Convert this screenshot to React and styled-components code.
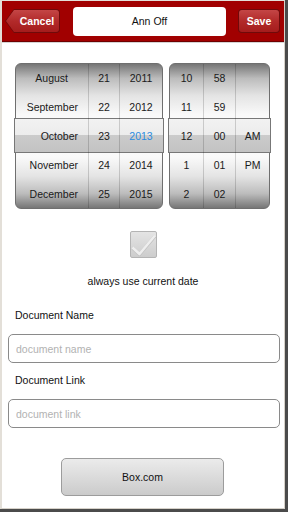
import React from "react";
import styled, { createGlobalStyle } from "styled-components";

const GlobalStyle = createGlobalStyle`
  html, body {
    margin: 0;
    padding: 0;
    background: #4b4b4b;
  }
  body {
    font-family: "Liberation Sans", Arial, sans-serif;
  }
  * {
    box-sizing: border-box;
  }
`;

const Frame = styled.div`
  width: 288px;
  height: 512px;
  background: #4b4b4b;
  padding: 0 3px 3px 0;
`;

const Screen = styled.div`
  height: 100%;
  background: #fff;
  border-left: 2px solid #e3dfd8;
  border-top: 1px solid #e3dfd8;
  border-right: 1px solid #d6d1c9;
  border-bottom: 1px solid #d6d1c9;
  display: flex;
  flex-direction: column;
`;

const Header = styled.header`
  height: 41px;
  flex-shrink: 0;
  background: #a10000;
  border-bottom: 1px solid #6e0000;
  box-shadow: 0 1px 0 #d4d4d4;
  display: flex;
  align-items: center;
  padding: 0 4px 0 3px;
`;

const BarButton = styled.button`
  width: ${(p) => p.$width}px;
  height: 24px;
  border: none;
  padding: 1px;
  border-radius: 4px;
  background: #6f0a0a;
  cursor: pointer;
  font-family: inherit;
  display: flex;
  clip-path: ${(p) =>
    p.$back ? "polygon(9px 0, 100% 0, 100% 100%, 9px 100%, 0 50%)" : "none"};

  span {
    flex: 1;
    display: flex;
    align-items: center;
    justify-content: center;
    border-radius: 3px;
    background: linear-gradient(#c44646 0%, #b22a2a 50%, #a51c1c 100%);
    color: #fff;
    font-weight: bold;
    font-size: 10.5px;
    padding-left: ${(p) => (p.$back ? "9px" : "0")};
    clip-path: ${(p) =>
      p.$back ? "polygon(8px 0, 100% 0, 100% 100%, 8px 100%, 0 50%)" : "none"};
  }
`;

const TitleField = styled.div`
  width: 153px;
  height: 29px;
  margin: 0 12px 0 13px;
  background: #fff;
  border-radius: 4px;
  display: flex;
  align-items: center;
  justify-content: center;
  font-size: 10.5px;
  color: #111;
`;

const Content = styled.main`
  display: flex;
  flex-direction: column;
  padding-top: 21px;
`;

const PickerRow = styled.div`
  display: flex;
  gap: 6px;
  padding-left: 13px;
`;

const Picker = styled.div`
  position: relative;
  display: flex;
  width: ${(p) => p.$width}px;
  height: 146px;
  border: 1px solid #6f6f6f;
  border-radius: 6px;
  background: linear-gradient(
    #767676 0%,
    #bcbcbc 10%,
    #e4e4e4 22%,
    #f9f9f9 35%,
    #ffffff 50%,
    #f9f9f9 65%,
    #e4e4e4 78%,
    #bcbcbc 90%,
    #767676 100%
  );
`;

const Band = styled.div`
  position: absolute;
  left: -2px;
  right: -2px;
  top: 54px;
  height: 35px;
  border: 1px solid #777;
  background: linear-gradient(#f2f2f2 0%, #ececec 50%, #cbcbcb 50%, #c3c3c3 100%);
`;

const Column = styled.div`
  position: relative;
  z-index: 1;
  width: ${(p) => p.$width}px;
  display: flex;
  flex-direction: column;
  border-left: ${(p) => (p.$first ? "none" : "1px solid rgba(0, 0, 0, 0.16)")};
`;

const Cell = styled.div`
  height: 29px;
  display: flex;
  align-items: center;
  justify-content: ${(p) => (p.$right ? "flex-end" : "center")};
  padding-right: ${(p) => (p.$right ? `${p.$inset}px` : "0")};
  font-size: 10.5px;
  color: ${(p) => (p.$active ? "#2b8be0" : "#1a1a1a")};
`;

const CheckWrap = styled.div`
  display: flex;
  justify-content: center;
  margin-top: 22px;
`;

const CheckBox = styled.div`
  width: 27px;
  height: 27px;
  border: 1px solid #b4b4b4;
  border-radius: 2px;
  background: linear-gradient(#e4e4e4, #cdcdcd);
  display: flex;
`;

const CheckLabel = styled.div`
  text-align: center;
  font-size: 10.5px;
  color: #111;
  margin-top: 17px;
  line-height: 13px;
`;

const Form = styled.section`
  display: flex;
  flex-direction: column;
  padding: 0 4px 0 6px;
  margin-top: 21px;
`;

const Label = styled.label`
  font-size: 10.5px;
  color: #111;
  line-height: 13px;
  padding-left: 7px;
  margin-top: ${(p) => p.$top || 0}px;
`;

const Input = styled.input`
  width: 272px;
  height: 29px;
  margin-top: 12px;
  border: 1px solid #8a8a8a;
  border-radius: 5px;
  padding: 0 7px;
  font-family: inherit;
  font-size: 10.5px;
  color: #111;
  outline: none;

  &::placeholder {
    color: #b2b2b2;
  }
`;

const ActionButton = styled.button`
  align-self: center;
  width: 163px;
  height: 38px;
  margin: 30px 3px 0 0;
  border: 1px solid #9c9c9c;
  border-radius: 5px;
  background: linear-gradient(#ebebeb, #cbcbcb);
  font-family: inherit;
  font-size: 10.5px;
  color: #111;
`;

const dateColumns = [
  { width: 72, right: true, values: ["August", "September", "October", "November", "December"] },
  { width: 31, values: ["21", "22", "23", "24", "25"] },
  { width: 43, values: ["2011", "2012", "2013", "2014", "2015"], active: 2 },
];

const timeColumns = [
  { width: 33, values: ["10", "11", "12", "1", "2"] },
  { width: 32, values: ["58", "59", "00", "01", "02"] },
  { width: 34, values: ["", "", "AM", "PM", ""] },
];

function Wheel({ columns, width }) {
  return (
    <Picker $width={width}>
      <Band />
      {columns.map((col, i) => (
        <Column key={i} $width={col.width} $first={i === 0}>
          {col.values.map((v, j) => (
            <Cell
              key={j}
              $right={col.right}
              $inset={col.right && j === 0 ? 20 : 10}
              $active={col.active === j}
            >
              {v}
            </Cell>
          ))}
        </Column>
      ))}
    </Picker>
  );
}

export default function App() {
  return (
    <>
      <GlobalStyle />
      <Frame>
        <Screen>
          <Header>
            <BarButton $back $width={55}>
              <span>Cancel</span>
            </BarButton>
            <TitleField>Ann Off</TitleField>
            <BarButton $width={42}>
              <span>Save</span>
            </BarButton>
          </Header>

          <Content>
            <PickerRow>
              <Wheel columns={dateColumns} width={148} />
              <Wheel columns={timeColumns} width={101} />
            </PickerRow>

            <CheckWrap>
              <CheckBox>
                <svg width="25" height="25" viewBox="0 0 25 25">
                  <polyline
                    points="1.5,16 8.5,22.5 24,4"
                    fill="none"
                    stroke="#c2c2c2"
                    strokeWidth="3.4"
                    strokeLinejoin="round"
                  />
                  <polyline
                    points="1.5,15.5 8.5,22 24,3.5"
                    fill="none"
                    stroke="#eeeeee"
                    strokeWidth="2.6"
                    strokeLinejoin="round"
                  />
                </svg>
              </CheckBox>
            </CheckWrap>
            <CheckLabel>always use current date</CheckLabel>

            <Form>
              <Label>Document Name</Label>
              <Input placeholder="document name" />
              <Label $top={11}>Document Link</Label>
              <Input placeholder="document link" />
              <ActionButton>Box.com</ActionButton>
            </Form>
          </Content>
        </Screen>
      </Frame>
    </>
  );
}
